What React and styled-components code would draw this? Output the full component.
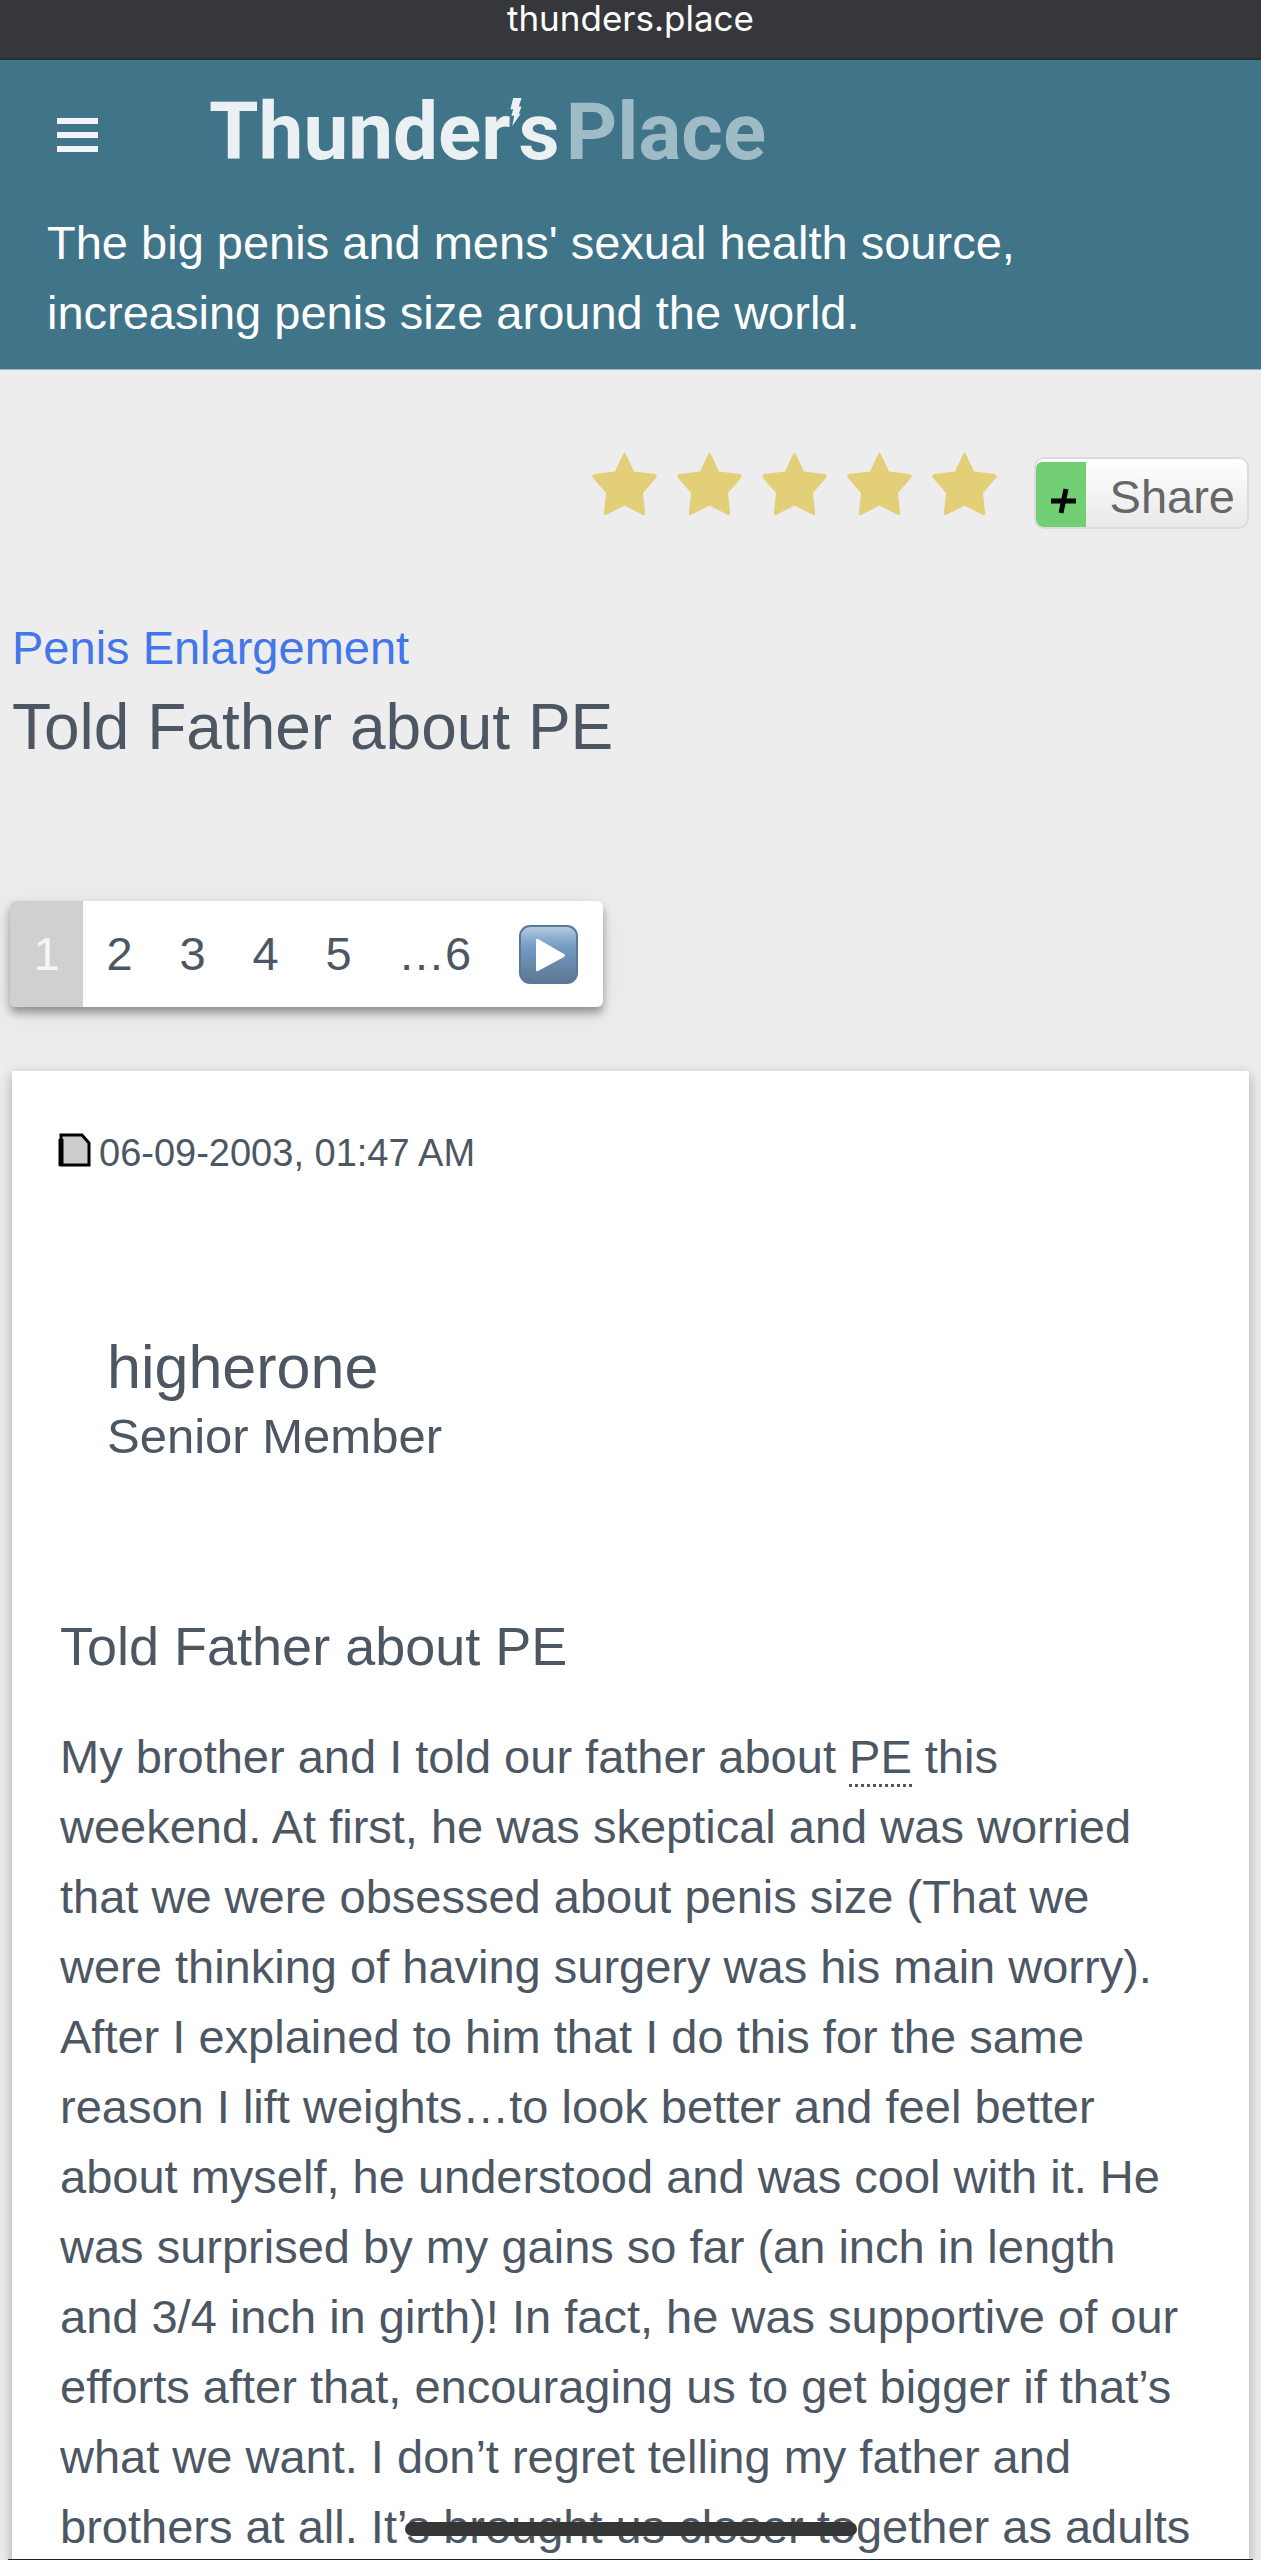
import React from 'react'
import styled, { createGlobalStyle } from 'styled-components'

const GlobalStyle = createGlobalStyle`
  * {
    box-sizing: border-box;
  }
  body {
    margin: 0;
    background: #ededed;
    color: #4d5763;
    font-family: "Liberation Sans", Arial, Helvetica, sans-serif;
    font-size: 47px;
    line-height: 70px;
  }
`

const AddressBar = styled.div`
  height: 60px;
  padding-bottom: 16px;
  background: #35373a;
  border-bottom: 2px solid #232f35;
  color: #fff;
  display: flex;
  align-items: flex-end;
  justify-content: center;
  font-family: Inter, sans-serif;
  font-size: 35px;
  line-height: 48px;
`
const Header = styled.header`
  background: #407488;
  border-bottom: 1px solid #9cb8c2;
  padding: 24px 47px 21px;
  color: #fff;
`
const Brand = styled.div`
  display: flex;
  align-items: center;
  height: 100px;
`
const MenuButton = styled.button`
  display: flex;
  flex-direction: column;
  gap: 8px;
  width: 61px;
  margin-right: 101px;
  padding: 12px 10px 10px;
  border: 0;
  background: none;
  cursor: pointer;
`
const MenuBar = styled.span`
  display: block;
  width: 100%;
  height: 6px;
  background: #f4f4f8;
`
const Logo = styled.a`
  display: flex;
  padding-bottom: 4px;
  font-family: Roboto, sans-serif;
  font-weight: 700;
  font-size: 80px;
  line-height: 92px;
  color: #ebf0f3;
  text-decoration: none;
`
const LogoPlace = styled.span`
  margin-left: 6px;
  color: #9fbbc5;
`
const Bolt = styled.svg`
  width: 14px;
  height: 28px;
  margin: 12px -4px 0 -2px;
`
const Tagline = styled.p`
  margin: 24px 0 0;
  max-width: 1000px;
`

const Main = styled.main`
  padding: 75px 12px 0;
`
const Actions = styled.div`
  display: flex;
  justify-content: flex-end;
  align-items: center;
  height: 96px;
`
const Stars = styled.div`
  display: flex;
  gap: 20px;
  margin-right: 37px;
  padding-bottom: 18px;
`
const StarShape = styled.svg`
  width: 65px;
  height: 64px;
`
const ShareButton = styled.button`
  display: flex;
  align-items: flex-end;
  height: 72px;
  padding: 0 12px 0 0;
  border: 2px solid #dcdcdc;
  border-radius: 10px;
  background: linear-gradient(#fff, #e9e9e9);
  color: #666;
  font: inherit;
  line-height: 60px;
  overflow: hidden;
  cursor: pointer;
`
const SharePlus = styled.span`
  display: flex;
  width: 50px;
  height: 65px;
  margin-right: 24px;
  padding: 22px 0 0 14px;
  background: #73cf73;
  border-radius: 6px 0 0 6px;
`
const Forum = styled.a`
  display: block;
  margin-top: 72px;
  color: #4276ea;
  text-decoration: none;
`
const Title = styled.h1`
  margin: 0;
  font-size: 64px;
  font-weight: 400;
  line-height: 88px;
`
const Pages = styled.nav`
  display: inline-flex;
  height: 106px;
  margin: 130px 0 64px -2px;
  background: #fff;
  border-radius: 6px;
  box-shadow: 0 6px 8px rgba(0, 0, 0, 0.35), 0 6px 30px rgba(0, 0, 0, 0.08);
  vertical-align: top;
`
const PageLink = styled.a`
  display: flex;
  align-items: center;
  justify-content: center;
  min-width: 73px;
  padding: 0 ${props => (props.$wide ? '25px' : '23px')};
  color: ${props => (props.$active ? '#f6f6f6' : '#4d5763')};
  background: ${props => (props.$active ? '#d0d0d0' : 'none')};
  border-radius: ${props => (props.$active ? '6px 0 0 6px' : '0')};
  text-decoration: none;
`
const Post = styled.article`
  padding: 50px 48px 0;
  background: #fff;
  box-shadow: 0 4px 12px rgba(0, 0, 0, 0.3);
`
const PostDate = styled.div`
  display: flex;
  align-items: center;
  gap: 8px;
  height: 64px;
  margin-left: -2px;
  font-size: 38px;

  svg {
    margin-bottom: 6px;
  }
`
const Author = styled.div`
  margin: 147px 0 140px 47px;
`
const AuthorName = styled.div`
  font-size: 61px;
`
const AuthorRank = styled.div`
  font-size: 49px;
  line-height: 68px;
`
const PostTitle = styled.h2`
  margin: 0 0 40px;
  font-size: 54px;
  font-weight: 400;
  line-height: 72px;
`
const PostText = styled.p`
  margin: 0;
`
const Term = styled.abbr`
  padding-bottom: 1px;
  border-bottom: 3px dotted #4d5763;
  text-decoration: none;
`
const HomeIndicator = styled.div`
  position: fixed;
  left: 405px;
  bottom: 24px;
  width: 452px;
  height: 14px;
  border-radius: 7px;
  background: #363636;
`
const ScreenEdge = styled.div`
  position: fixed;
  left: 8px;
  right: 8px;
  bottom: 0;
  height: 1px;
  background: #222;
`

const Star = () => (
  <StarShape viewBox="0 0 65 64">
    <path
      d="M31.200 2q1.300-3 2.600 0L42 19.500l20.500 2.500q3.500 1 1.500 4L51 41l2.200 20.500q-.2 2.500-2.200 1.500L32.500 53.500 14 63q-2 1-2.200-1.500L14 41 1 26q-2-3 1.500-4L23 19.500Z"
      fill="#e2cf78"
    />
  </StarShape>
)

const PlusIcon = () => (
  <svg width="27" height="34" viewBox="0 0 27 34">
    <path d="M1 17h25M16 5l-5 24" stroke="#000" strokeWidth="5" />
  </svg>
)

const NextIcon = () => (
  <svg width="59" height="59" viewBox="0 0 59 59">
    <defs>
      <linearGradient id="next" x1="0" y1="0" x2="0" y2="1">
        <stop offset="0" stopColor="#b9cfe0" />
        <stop offset="0.2" stopColor="#8eb0cf" />
        <stop offset="0.4" stopColor="#7199c2" />
        <stop offset="1" stopColor="#5c7690" />
      </linearGradient>
    </defs>
    <rect x="1" y="1" width="57" height="57" rx="10" fill="url(#next)" stroke="#58799a" strokeWidth="2" />
    <path d="M17 15v30q0 2 2 1l26-14q2-2 0-3L19 14q-2-1-2 1Z" fill="#fff" />
  </svg>
)

const PostIcon = () => (
  <svg width="33" height="34" viewBox="0 0 33 34">
    <path d="M3 2h21l7 8v22H3Z" fill="#ccc" stroke="#000" strokeWidth="3" />
    <path d="M3 6v27" stroke="#000" strokeWidth="5" />
  </svg>
)

const pages = ['1', '2', '3', '4', '5', '…6']

const App = () => {
  return (
    <>
      <GlobalStyle />
      <AddressBar>thunders.place</AddressBar>
      <Header>
        <Brand>
          <MenuButton aria-label="Menu">
            <MenuBar />
            <MenuBar />
            <MenuBar />
          </MenuButton>
          <Logo href="#">
            Thunder
            <Bolt viewBox="0 0 14 30">
              <path d="M4 0h9l-3 9h3l-3 8h2L3 30l2-11H2l2-7H1Z" fill="#ebf0f3" />
            </Bolt>
            s<LogoPlace>Place</LogoPlace>
          </Logo>
        </Brand>
        <Tagline>
          The big penis and mens' sexual health source, increasing penis size around the world.
        </Tagline>
      </Header>
      <Main>
        <Actions>
          <Stars role="img" aria-label="5 stars">
            {[1, 2, 3, 4, 5].map(n => <Star key={n} />)}
          </Stars>
          <ShareButton>
            <SharePlus><PlusIcon /></SharePlus>
            Share
          </ShareButton>
        </Actions>
        <Forum href="#">Penis Enlargement</Forum>
        <Title>Told Father about PE</Title>
        <Pages aria-label="Pages">
          {pages.map(page => (
            <PageLink key={page} href="#" $active={page === '1'}>{page}</PageLink>
          ))}
          <PageLink href="#" aria-label="Next page" $wide><NextIcon /></PageLink>
        </Pages>
        <Post>
          <PostDate><PostIcon />06-09-2003, 01:47 AM</PostDate>
          <Author>
            <AuthorName>higherone</AuthorName>
            <AuthorRank>Senior Member</AuthorRank>
          </Author>
          <PostTitle>Told Father about PE</PostTitle>
          <PostText>
            My brother and I told our father about <Term>PE</Term> this weekend. At first, he was
            skeptical and was worried that we were obsessed about penis size (That we were thinking
            of having surgery was his main worry). After I explained to him that I do this for the
            same reason I lift weights…to look better and feel better about myself, he understood
            and was cool with it. He was surprised by my gains so far (an inch in length and 3/4
            inch in girth)! In fact, he was supportive of our efforts after that, encouraging us to
            get bigger if that’s what we want. I don’t regret telling my father and brothers at all.
            It’s brought us closer together as adults
          </PostText>
        </Post>
      </Main>
      <HomeIndicator />
      <ScreenEdge />
    </>
  )
}
export default App
